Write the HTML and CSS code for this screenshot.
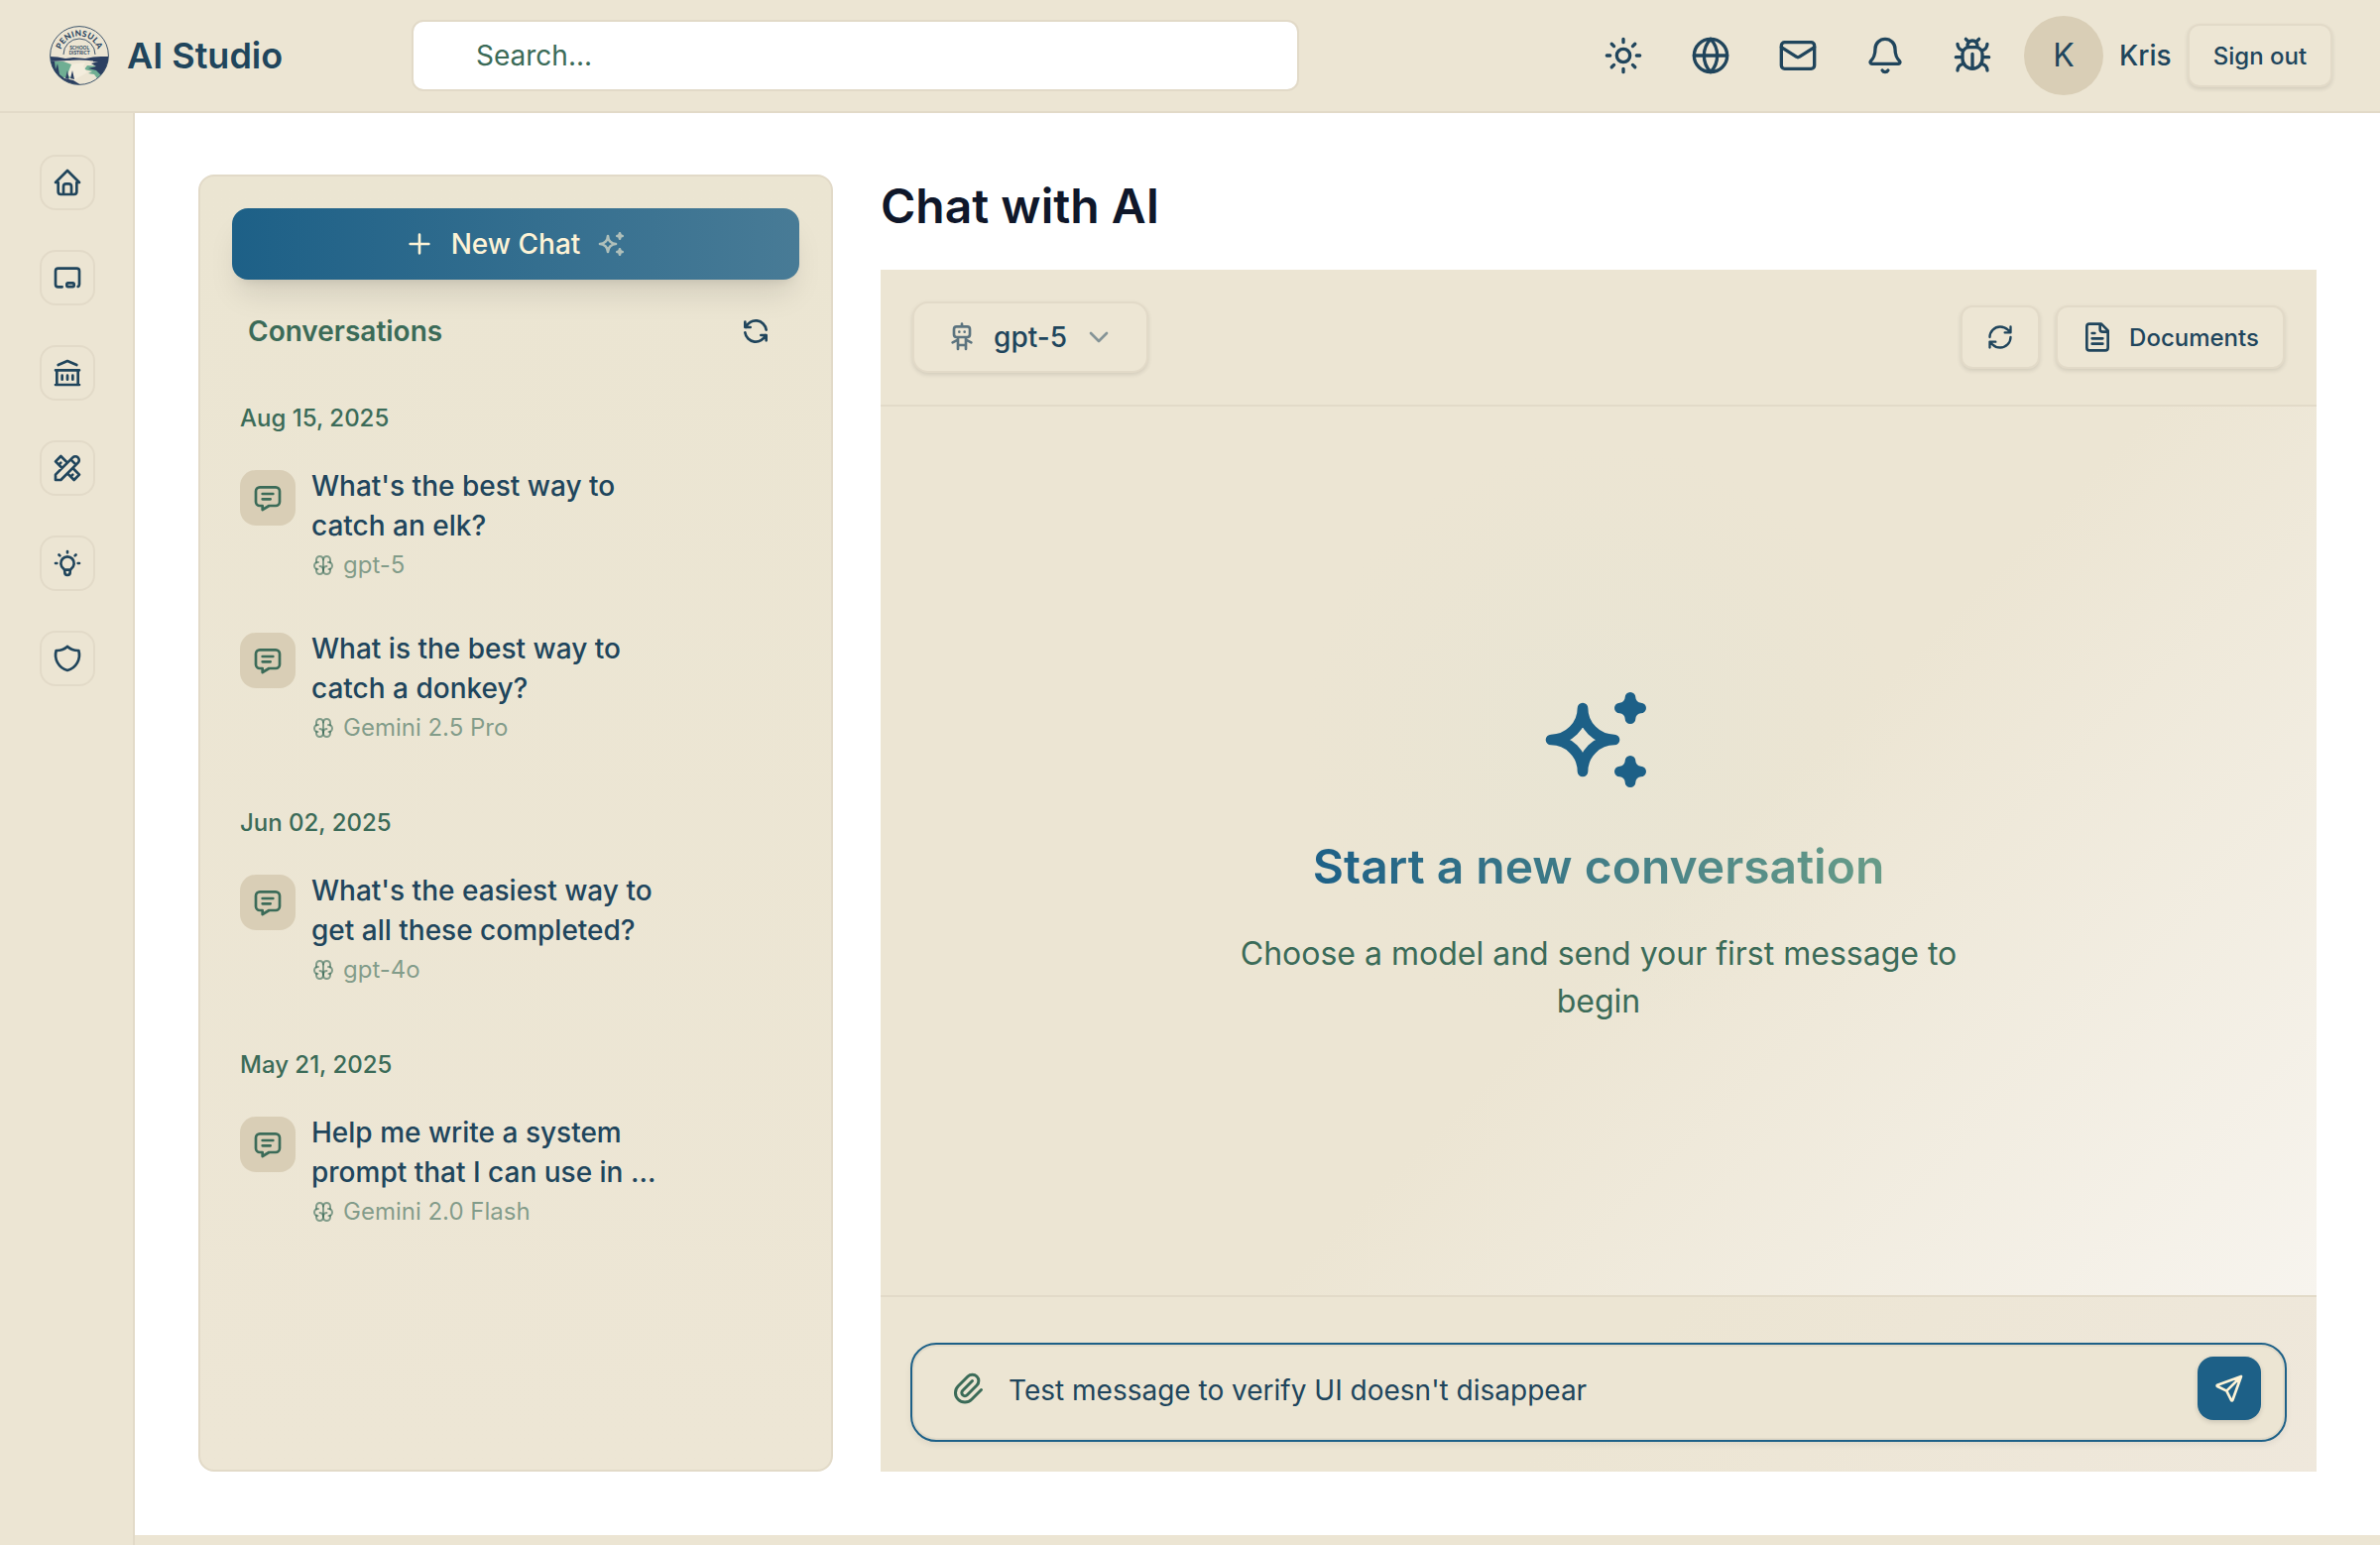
FILE: index.html
```html
<!DOCTYPE html>
<html lang="en">
<head>
<meta charset="utf-8">
<title>AI Studio</title>
<link rel="stylesheet" href="styles.css">
</head>
<body>
<svg class="defs" aria-hidden="true">
  <symbol id="message" viewBox="0 0 24 24"><path d="M8 9h8M8 13h6M18 4a3 3 0 0 1 3 3v8a3 3 0 0 1-3 3h-5l-5 3v-3h-2a3 3 0 0 1-3-3v-8a3 3 0 0 1 3-3h12z"/></symbol>
  <symbol id="brain" viewBox="0 0 24 24"><path d="M15.5 13a3.5 3.5 0 0 0-3.5 3.5v1a3.5 3.5 0 0 0 7 0v-1.8"/><path d="M8.5 13a3.5 3.5 0 0 1 3.5 3.5v1a3.5 3.5 0 0 1-7 0v-1.8"/><path d="M17.5 16a3.5 3.5 0 0 0 0-7h-.5"/><path d="M19 9.3v-2.8a3.5 3.5 0 0 0-7 0"/><path d="M6.5 16a3.5 3.5 0 0 1 0-7h.5"/><path d="M5 9.3v-2.8a3.5 3.5 0 0 1 7 0v10"/></symbol>
  <symbol id="sparkles" viewBox="0 0 24 24"><path d="M16 18a2 2 0 0 1 2 2a2 2 0 0 1 2-2a2 2 0 0 1-2-2a2 2 0 0 1-2 2zm0-12a2 2 0 0 1 2 2a2 2 0 0 1 2-2a2 2 0 0 1-2-2a2 2 0 0 1-2 2zm-7 12a6 6 0 0 1 6-6a6 6 0 0 1-6-6a6 6 0 0 1-6 6a6 6 0 0 1 6 6z"/></symbol>
</svg>
<div class="app">
  <header class="topbar">
    <div class="brand">
      <svg class="logo" viewBox="0 0 60 60">
        <defs>
          <clipPath id="seal"><circle cx="30" cy="30" r="29.3"/></clipPath>
          <path id="arc" d="M11 25.2A19.6 19.6 0 0 1 49 25.2"/>
        </defs>
        <g clip-path="url(#seal)">
          <path d="M0 31l8 .5 8 1.5 8-1 12 1 8-1.500 8-.5 8 0v6l-20-1-20-1-20 1z" fill="#2b3f61"/>
          <path d="M16 35.500q14-2 28 0v1.500q-14-1.500-28 0z" fill="#ece5d3"/>
          <path d="M0 36h14l8 3 6 8-8 6-14-2z" fill="#6fae93"/>
          <path d="M38 40l14 1 2 9-6 3-3-4-6-1 4-2-8-2z" fill="#6fae93"/>
          <path d="M42 38l18-5v15l-8 2-5-5-8-2 8-2z" fill="#2b3f61"/>
          <path d="M22 39l14-2-2 4 4 6-14 8-6-6z" fill="#f3eddd"/>
          <path d="M0 36l5 0 1 8 2-6 2 11 5 4 9 2 8 5H6z" fill="#2b3f61"/>
          <path d="M16 53l2-8 1.500 9zm5 0l2-8 2 9z" fill="#2b3f61"/>
        </g>
        <circle cx="30" cy="30" r="29.4" fill="none" stroke="#2b4560" stroke-width=".9"/>
        <path d="M14 29a16 16 0 0 1 32 0" fill="none" stroke="#2b4560" stroke-width=".9"/>
        <text class="seal-name"><textPath href="#arc" startOffset="50%" text-anchor="middle">PENINSULA</textPath></text>
        <text class="seal-sub" x="30" y="24.3" text-anchor="middle">SCHOOL</text>
        <text class="seal-sub" x="30" y="29" text-anchor="middle">DISTRICT</text>
      </svg>
      <span class="brand-name">AI Studio</span>
    </div>
    <div class="search">Search...</div>
    <nav class="actions">
      <svg class="icon i40" viewBox="0 0 24 24"><circle cx="12" cy="12" r="4"/><path d="M12 2v2M12 20v2m-7.07-17.07 1.41 1.41m11.32 11.32 1.41 1.41M2 12h2m16 0h2M6.34 17.66l-1.41 1.41M19.07 4.93l-1.41 1.41"/></svg>
      <svg class="icon i40" viewBox="0 0 24 24"><circle cx="12" cy="12" r="10"/><path d="M12 2a14.5 14.5 0 0 0 0 20 14.5 14.5 0 0 0 0-20M2 12h20"/></svg>
      <svg class="icon i40" viewBox="0 0 24 24"><rect x="2" y="4" width="20" height="16" rx="2"/><path d="m22 7-8.97 5.7a1.94 1.94 0 0 1-2.06 0L2 7"/></svg>
      <svg class="icon i40" viewBox="0 0 24 24"><path d="M10.268 21a2 2 0 0 0 3.464 0M3.262 15.326A1 1 0 0 0 4 17h16a1 1 0 0 0 .74-1.673C19.41 13.956 18 12.499 18 8A6 6 0 0 0 6 8c0 4.499-1.411 5.956-2.738 7.326"/></svg>
      <svg class="icon i40" viewBox="0 0 24 24"><path d="m8 2 1.88 1.88M14.12 3.88 16 2M9 7.13v-1a3.003 3.003 0 1 1 6 0v1M12 20c-3.3 0-6-2.7-6-6v-3a4 4 0 0 1 4-4h4a4 4 0 0 1 4 4v3c0 3.3-2.7 6-6 6M12 20v-9M6.53 9C4.6 8.8 3 7.1 3 5M6 13H2M3 21c0-2.1 1.7-3.9 3.8-4M20.97 5c0 2.1-1.6 3.8-3.5 4M22 13h-4M17.2 17c2.1.1 3.8 1.9 3.8 4"/></svg>
    </nav>
    <div class="account">
      <span class="avatar">K</span>
      <span class="user">Kris</span>
      <button class="btn signout">Sign out</button>
    </div>
  </header>

  <aside class="rail">
    <a class="rail-item"><svg class="icon i32" viewBox="0 0 24 24"><path d="M5 12H3l9-9 9 9h-2M5 12v7a2 2 0 0 0 2 2h10a2 2 0 0 0 2-2v-7M9 21v-6a2 2 0 0 1 2-2h2a2 2 0 0 1 2 2v6"/></svg></a>
    <a class="rail-item"><svg class="icon i32" viewBox="0 0 24 24"><path d="M8 19H5a2 2 0 0 1-2-2V7a2 2 0 0 1 2-2h14a2 2 0 0 1 2 2v10a2 2 0 0 1-1 1.730"/><rect x="11.500" y="16" width="5.500" height="2.800" rx="1"/></svg></a>
    <a class="rail-item"><svg class="icon i32" viewBox="0 0 24 24"><path d="M3 21h18M3 10h18M5 6l7-3 7 3M4 10v11M20 10v11M8 14v3M12 14v3M16 14v3"/></svg></a>
    <a class="rail-item"><svg class="icon i32" viewBox="0 0 24 24"><path d="M3 21h4l13-13a1.5 1.5 0 0 0-4-4l-13 13v4M14.5 5.5l4 4M12 8l-5-5-4 4 5 5M7 8l-1.500 1.500M16 12l5 5-4 4-5-5M16 17l-1.500 1.500"/></svg></a>
    <a class="rail-item"><svg class="icon i32" viewBox="0 0 24 24"><path d="M3 12h1M12 3v1M20 12h1M5.600 5.600l.7.7M18.400 5.600l-.7.7M9 16a5 5 0 1 1 6 0a3.500 3.500 0 0 0-1 3a2 2 0 0 1-4 0a3.500 3.500 0 0 0-1-3M9.700 17h4.600"/></svg></a>
    <a class="rail-item"><svg class="icon i32" viewBox="0 0 24 24"><path d="M12 3a12 12 0 0 0 8.500 3a12 12 0 0 1-8.500 15a12 12 0 0 1-8.500-15a12 12 0 0 0 8.500-3"/></svg></a>
  </aside>

  <main class="content">
    <section class="history">
      <button class="new-chat">
        <svg class="icon i32" viewBox="0 0 24 24"><path d="M12 5v14M5 12h14"/></svg>
        <span>New Chat</span>
        <svg class="icon i32 faded"><use href="#sparkles"/></svg>
      </button>
      <div class="history-head">
        <h2>Conversations</h2>
        <svg class="icon i32" viewBox="0 0 24 24"><path d="M20 11a8.1 8.1 0 0 0-15.5-2m-.5-4v4h4M4 13a8.1 8.1 0 0 0 15.5 2m.5 4v-4h-4"/></svg>
      </div>
      <div class="group">
        <h3>Aug 15, 2025</h3>
        <article class="chat"><span class="chip"><svg class="icon i32"><use href="#message"/></svg></span><div><p class="chat-title">What's the best way to<br>catch an elk?</p><p class="model"><svg class="icon i24"><use href="#brain"/></svg>gpt-5</p></div></article>
        <article class="chat"><span class="chip"><svg class="icon i32"><use href="#message"/></svg></span><div><p class="chat-title">What is the best way to<br>catch a donkey?</p><p class="model"><svg class="icon i24"><use href="#brain"/></svg>Gemini 2.5 Pro</p></div></article>
      </div>
      <div class="group">
        <h3>Jun 02, 2025</h3>
        <article class="chat"><span class="chip"><svg class="icon i32"><use href="#message"/></svg></span><div><p class="chat-title">What's the easiest way to<br>get all these completed?</p><p class="model"><svg class="icon i24"><use href="#brain"/></svg>gpt-4o</p></div></article>
      </div>
      <div class="group">
        <h3>May 21, 2025</h3>
        <article class="chat"><span class="chip"><svg class="icon i32"><use href="#message"/></svg></span><div><p class="chat-title">Help me write a system<br>prompt that I can use in ...</p><p class="model"><svg class="icon i24"><use href="#brain"/></svg>Gemini 2.0 Flash</p></div></article>
      </div>
    </section>

    <section class="chat-column">
      <h1>Chat with AI</h1>
      <div class="panel">
        <div class="panel-head">
          <button class="btn model-select">
            <svg class="icon i32 robot" viewBox="0 0 24 24"><path d="M6 6a2 2 0 0 1 2-2h8a2 2 0 0 1 2 2v4a2 2 0 0 1-2 2H8a2 2 0 0 1-2-2zM12 2v2M9 12v9M15 12v9M5 16l4-2M15 14l4 2M9 18h6M10 8v.01M14 8v.01"/></svg>
            <span>gpt-5</span>
            <svg class="icon i32 chevron" viewBox="0 0 24 24"><path d="M6 9l6 6 6-6"/></svg>
          </button>
          <div class="tools">
            <button class="btn reload"><svg class="icon i28" viewBox="0 0 24 24"><path d="M3 12a9 9 0 0 1 9-9 9.750 9.750 0 0 1 6.740 2.740L21 8M21 3v5h-5M21 12a9 9 0 0 1-9 9 9.750 9.750 0 0 1-6.740-2.740L3 16M8 16H3v5"/></svg></button>
            <button class="btn documents"><svg class="icon i32" viewBox="0 0 24 24"><path d="M15 2H6a2 2 0 0 0-2 2v16a2 2 0 0 0 2 2h12a2 2 0 0 0 2-2V7ZM14 2v4a2 2 0 0 0 2 2h4M10 9H8M16 13H8M16 17H8"/></svg>Documents</button>
          </div>
        </div>
        <div class="empty">
          <svg class="icon hero"><use href="#sparkles"/></svg>
          <h2>Start a new conversation</h2>
          <p>Choose a model and send your first message to begin</p>
        </div>
        <div class="composer">
          <div class="input">
            <svg class="icon i36 clip" viewBox="0 0 24 24"><path d="M15 7l-6.500 6.500a1.500 1.500 0 0 0 3 3l6.500-6.500a3 3 0 0 0-6-6l-6.500 6.500a4.500 4.500 0 0 0 9 9l6.500-6.500"/></svg>
            <span class="draft">Test message to verify UI doesn't disappear</span>
            <button class="send"><svg class="icon i32" viewBox="0 0 24 24"><path d="M10 14l11-11M21 3l-6.500 18a.55.55 0 0 1-1 0l-3.500-7-7-3.500a.55.55 0 0 1 0-1l18-6.500"/></svg></button>
          </div>
        </div>
      </div>
    </section>
  </main>
  <footer class="footer"></footer>
</div>
</body>
</html>
```
FILE: styles.css
```css
* { box-sizing: border-box; margin: 0; padding: 0; }

:root {
  --sand: #ece5d3;
  --line: #e2dac8;
  --navy: #20455c;
  --blue: #1d6087;
  --green: #3b6b58;
  --tan: #d9ceb6;
}

body {
  background: #fff;
  color: var(--navy);
  font-family: Inter, "Liberation Sans", sans-serif;
  overflow: hidden;
}

button { font: inherit; color: inherit; border: 0; background: none; }
.defs { display: none; }

.icon {
  flex: none;
  fill: none;
  stroke: currentColor;
  stroke-width: 2;
  stroke-linecap: round;
  stroke-linejoin: round;
}
.i24 { width: 24px; height: 24px; }
.i28 { width: 28px; height: 28px; }
.i32 { width: 32px; height: 32px; }
.i36 { width: 36px; height: 36px; }
.i40 { width: 40px; height: 40px; }

.app {
  display: grid;
  grid-template: 114px 1434px 10px / 136px 1fr;
  height: 1558px;
}

/* Top bar */
.topbar {
  grid-column: 1 / 3;
  display: flex;
  align-items: center;
  padding: 0 48px 0 50px;
  background: var(--sand);
  border-bottom: 2px solid var(--line);
}
.brand { display: flex; align-items: center; gap: 18px; width: 365px; }
.logo { width: 60px; height: 60px; }
.seal-name { font: 900 8.3px Lato, sans-serif; letter-spacing: .3px; fill: #2b4560; }
.seal-sub { font: 700 4.8px Lato, sans-serif; fill: #2b4560; }
.brand-name { font-size: 36px; font-weight: 600; }
.search {
  width: 895px;
  height: 72px;
  padding-left: 63px;
  border: 2px solid var(--line);
  border-radius: 12px;
  background: #fff;
  color: var(--green);
  font-size: 28px;
  line-height: 68px;
}
.actions { display: flex; gap: 48px; margin-left: auto; }
.account { display: flex; align-items: center; margin-left: 32px; }
.avatar {
  width: 80px;
  height: 80px;
  border-radius: 50%;
  background: var(--tan);
  font-size: 32px;
  line-height: 80px;
  text-align: center;
}
.user { width: 69px; margin-left: 16px; font-size: 28px; font-weight: 500; }

.btn {
  display: flex;
  align-items: center;
  justify-content: center;
  border: 2px solid var(--line);
  border-radius: 12px;
  background: #ede6d4;
  box-shadow: 0 2px 4px rgba(0, 0, 0, .11);
  font-size: 24px;
  font-weight: 500;
}
.signout { width: 146px; height: 64px; }

/* Navigation rail */
.rail {
  grid-row: 2 / 4;
  display: flex;
  flex-direction: column;
  align-items: center;
  gap: 40px;
  padding: 42px 0 0 2px;
  background: var(--sand);
  border-right: 2px solid var(--line);
}
.rail-item {
  display: grid;
  place-items: center;
  width: 56px;
  height: 56px;
  border: 2px solid var(--line);
  border-radius: 16px;
}

.content {
  display: grid;
  grid-template-columns: 640px 1448px;
  gap: 48px;
  padding: 62px 64px 64px;
}
.footer { background: var(--sand); }

/* Conversation history */
.history {
  padding: 32px;
  border: 2px solid var(--line);
  border-radius: 16px;
  background: linear-gradient(180deg, #ebe5d2, #ede6d5);
}
.new-chat {
  display: flex;
  align-items: center;
  justify-content: center;
  gap: 16px;
  width: 572px;
  height: 72px;
  border-radius: 16px;
  background: linear-gradient(90deg, #1d6087, #487b96);
  box-shadow: 0 20px 30px -6px rgba(0, 0, 0, .1), 0 8px 12px -8px rgba(0, 0, 0, .12);
  color: #fdf3d6;
  font-size: 28px;
  font-weight: 500;
}
.faded { opacity: .6; }
.history-head {
  display: flex;
  align-items: center;
  justify-content: space-between;
  height: 64px;
  margin-top: 20px;
  padding: 0 28px 0 16px;
}
.history-head h2 { color: var(--green); font-size: 28px; font-weight: 600; }
.group { padding: 32px 8px 0; }
.group h3 {
  height: 48px;
  padding-top: 8px;
  color: var(--green);
  font-size: 24px;
  font-weight: 500;
  line-height: 32px;
}
.chat { display: flex; gap: 16px; height: 164px; padding-top: 24px; }
.chip {
  display: grid;
  place-items: center;
  width: 56px;
  height: 56px;
  margin-top: 4px;
  border-radius: 16px;
  background: var(--tan);
  color: var(--green);
}
.chat-title { font-size: 28px; font-weight: 500; line-height: 40px; }
.model {
  display: flex;
  align-items: center;
  gap: 8px;
  color: rgba(59, 107, 88, .6);
  font-size: 24px;
  line-height: 40px;
}

/* Chat */
.chat-column h1 {
  height: 96px;
  color: #0f172a;
  font-size: 48px;
  font-weight: 600;
  line-height: 64px;
}
.panel {
  display: grid;
  grid-template-rows: 138px 898px 176px;
}
.panel-head {
  display: flex;
  align-items: center;
  justify-content: space-between;
  padding: 0 32px;
  border-bottom: 2px solid var(--line);
  background: #ece5d3;
}
.model-select { gap: 16px; width: 238px; height: 72px; border-radius: 16px; font-size: 28px; }
.robot { opacity: .7; }
.chevron { opacity: .5; }
.tools { display: flex; gap: 16px; }
.reload { width: 80px; height: 64px; }
.documents { gap: 16px; width: 231px; height: 64px; }
.empty {
  display: flex;
  flex-direction: column;
  align-items: center;
  padding-top: 272px;
  border-bottom: 2px solid var(--line);
  background:
    radial-gradient(circle 300px at 50% 336px, rgba(228, 228, 212, .45), rgba(228, 228, 212, 0)),
    linear-gradient(135deg, #ece5d3 55%, #f7f4ee 100%);
}
.hero { width: 128px; height: 128px; color: var(--blue); }
.empty h2 {
  margin-top: 32px;
  background: linear-gradient(90deg, #1d6087, #689c88);
  background-clip: text;
  color: transparent;
  font-size: 48px;
  font-weight: 600;
  line-height: 64px;
}
.empty p {
  width: 768px;
  margin-top: 32px;
  color: var(--green);
  font-size: 32px;
  line-height: 48px;
  text-align: center;
}
.composer { padding: 46px 30px 0; background: linear-gradient(135deg, #ece5d3 50%, #efe8dc); }
.input {
  display: flex;
  align-items: center;
  height: 100px;
  padding: 0 24px 0 38px;
  border: 2px solid var(--blue);
  border-radius: 26px;
  background: #ece5d3;
  box-shadow: inset 0 0 0 2px var(--line), 0 3px 6px rgba(0, 0, 0, .06);
}
.clip { margin-top: -8px; color: var(--green); }
.draft { margin: -4px 0 0 23px; font-size: 28px; }
.send {
  display: grid;
  place-items: center;
  width: 64px;
  height: 64px;
  margin: -8px 0 0 auto;
  border-radius: 16px;
  background: var(--blue);
  box-shadow: 0 2px 5px rgba(0, 0, 0, .15);
  color: #fdf3d6;
}
```
